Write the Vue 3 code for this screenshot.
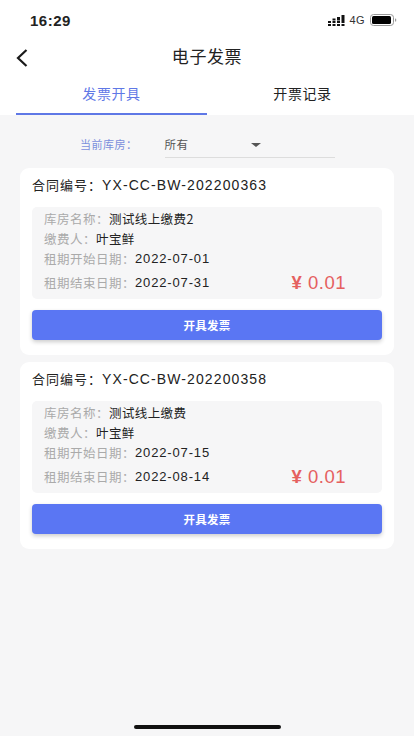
<script setup>
const cards = [
  { no: 'YX-CC-BW-202200363', store: '测试线上缴费2', payer: '叶宝鲜', start: '2022-07-01', end: '2022-07-31', amount: '0.01' },
  { no: 'YX-CC-BW-202200358', store: '测试线上缴费', payer: '叶宝鲜', start: '2022-07-15', end: '2022-08-14', amount: '0.01' },
]
</script>

<template>
  <div class="page">
    <div class="top">
      <div class="status">
        <span class="time">16:29</span>
        <div class="status-right">
          <svg class="signal" width="17" height="11" viewBox="0 0 17 11">
            <rect x="0" y="6" width="3" height="2" /><rect x="0" y="9" width="3" height="2" />
            <rect x="4.500" y="3.500" width="3" height="2" /><rect x="4.500" y="6" width="3" height="2" /><rect x="4.500" y="9" width="3" height="2" />
            <rect x="9" y="2" width="3" height="3.500" /><rect x="9" y="6" width="3" height="2" /><rect x="9" y="9" width="3" height="2" />
            <rect x="13.500" y="0" width="3" height="8" /><rect x="13.500" y="9" width="3" height="2" />
          </svg>
          <span class="net">4G</span>
          <svg class="battery" width="27" height="12" viewBox="0 0 27 12">
            <rect x="0.500" y="0.500" width="23" height="11" rx="3" fill="none" stroke="#999" />
            <rect x="2" y="2" width="19" height="8" rx="1.500" fill="#000" />
            <rect x="25" y="4.500" width="1.200" height="3" rx="0.600" fill="#999" />
          </svg>
        </div>
      </div>
      <div class="nav">
        <svg class="back" width="14" height="20" viewBox="0 0 14 20">
          <path d="M11.500 2 L3 10 L11.500 18" fill="none" stroke="#1a1a1a" stroke-width="2.200" />
        </svg>
        <span class="title">电子发票</span>
      </div>
      <div class="tabs">
        <div class="tab active">发票开具</div>
        <div class="tab">开票记录</div>
      </div>
    </div>

    <div class="filter">
      <span class="filter-label">当前库房：</span>
      <div class="select">
        <span>所有</span>
        <i class="caret"></i>
      </div>
    </div>

    <div class="list">
      <div v-for="c in cards" :key="c.no" class="card">
        <div class="contract">合同编号：<span class="no">{{ c.no }}</span></div>
        <div class="info">
          <div class="row"><span class="k">库房名称：</span><span class="v">{{ c.store }}</span></div>
          <div class="row"><span class="k">缴费人：</span><span class="v">{{ c.payer }}</span></div>
          <div class="row"><span class="k">租期开始日期：</span><span class="date">{{ c.start }}</span></div>
          <div class="row last">
            <span class="k">租期结束日期：</span><span class="date">{{ c.end }}</span>
            <span class="amount"><span class="yen">¥</span> {{ c.amount }}</span>
          </div>
        </div>
        <button class="btn">开具发票</button>
      </div>
    </div>

    <div class="home"></div>
  </div>
</template>

<style>
html, body { margin: 0; padding: 0; }
</style>

<style scoped>
.page {
  position: relative;
  width: 414px;
  height: 736px;
  overflow: hidden;
  background: #f6f6f7;
  font-family: "Noto Sans CJK SC", "Liberation Sans", sans-serif;
  color: #222;
}
.top { background: #fff; height: 115px; }
.status {
  height: 40px;
  display: flex;
  align-items: center;
  justify-content: space-between;
  padding: 0 17px 0 30px;
}
.time { font-family: "Liberation Sans", sans-serif; font-size: 15px; font-weight: 700; letter-spacing: 0.5px; color: #222; }
.status-right { display: flex; align-items: center; gap: 5px; }
.signal { fill: #111; }
.net { font-family: "Liberation Sans", sans-serif; font-size: 11px; color: #333; letter-spacing: 0.4px; }
.nav { position: relative; height: 36px; display: flex; align-items: center; justify-content: center; }
.back { position: absolute; left: 15px; top: 8px; }
.title { font-size: 17px; line-height: 32px; height: 32px; margin-bottom: 4px; color: #222; letter-spacing: 0.6px; }
.tabs { display: flex; padding: 0 16px; height: 39px; }
.tab { width: 191px; font-size: 14px; line-height: 34px; text-align: center; color: #222; letter-spacing: 0.6px; }
.active { color: #5f78e6; border-bottom: 2px solid #5f78e6; height: 37px; }
.filter { height: 53px; display: flex; align-items: flex-start; padding-left: 80px; }
.filter-label { font-size: 11px; line-height: 16px; margin-top: 21px; color: #7b8fdc; letter-spacing: 0.5px; }
.select {
  width: 170px;
  margin-left: 27px;
  margin-top: 21px;
  height: 21px;
  border-bottom: 1px solid #ddd;
  display: flex;
  justify-content: space-between;
  font-size: 11.500px;
  line-height: 16px;
  color: #555;
  letter-spacing: 0.4px;
}
.caret {
  width: 0;
  height: 0;
  margin: 7px 74px 0 0;
  border-left: 5px solid transparent;
  border-right: 5px solid transparent;
  border-top: 4px solid #555;
}
.list { display: flex; flex-direction: column; gap: 7px; padding: 0 20px; }
.card { background: #fff; border-radius: 9px; padding: 0 12px; height: 187px; box-sizing: border-box; }
.contract { font-size: 13px; line-height: 18px; padding-top: 8px; height: 39px; color: #222; letter-spacing: 1px; box-sizing: border-box; }
.no { font-family: "Liberation Sans", sans-serif; font-size: 14px; letter-spacing: 1.1px; }
.info {
  background: #f6f6f7;
  border-radius: 5px;
  height: 92px;
  padding: 2px 12px 0;
  box-sizing: border-box;
}
.row { display: flex; align-items: center; height: 20px; font-size: 12.500px; line-height: 20px; }
.row.last { height: 24px; margin-top: 2px; }
.k { color: #aaa; letter-spacing: 0.5px; }
.v { color: #222; font-size: 12.500px; letter-spacing: 0.4px; }
.date { color: #222; font-family: "Liberation Sans", sans-serif; font-size: 13px; letter-spacing: 0.85px; }
.amount {
  margin-left: auto;
  margin-right: 24px;
  font-family: "Liberation Sans", sans-serif;
  font-size: 18.500px;
  color: #e5605f;
  letter-spacing: 0.5px;
}
.yen { font-weight: 700; }
.btn {
  display: block;
  width: 100%;
  height: 30px;
  margin-top: 11px;
  border: 0;
  border-radius: 4px;
  background: #5a76f3;
  color: #fff;
  font-family: inherit;
  font-size: 11.500px;
  font-weight: 700;
  letter-spacing: 0.3px;
  box-shadow: 0 2px 4px rgba(0, 0, 0, 0.2);
}
.home {
  position: absolute;
  left: 134px;
  top: 725px;
  width: 147px;
  height: 4px;
  border-radius: 2px;
  background: #111;
}
</style>
